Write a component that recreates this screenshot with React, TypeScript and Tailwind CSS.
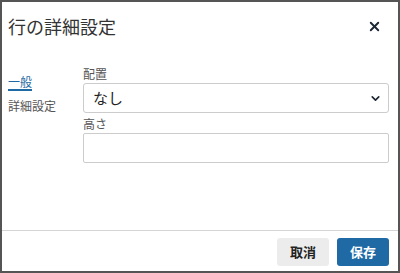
import { X, ChevronDown } from "lucide-react";

const font = { fontFamily: '"Noto Sans CJK JP", "Noto Sans", sans-serif' };

export default function App() {
  return (
    <div
      className="w-[400px] h-[273px] bg-white border-2 border-[#555] flex flex-col text-[#333]"
      style={font}
    >
      {/* Header */}
      <div className="h-[48px] shrink-0 flex items-center justify-between pl-[6px] pr-[16px]">
        <h1 className="text-[18px] leading-[24px] text-[#333]">行の詳細設定</h1>
        <button className="text-[#1c2733]">
          <X size={15} strokeWidth={3} />
        </button>
      </div>

      {/* Body */}
      <div className="flex-1 flex pt-[16px]">
        <nav className="w-[81px] shrink-0 pl-[6px] pt-[2px]">
          <div>
            <span className="inline-block text-[12px] leading-[14px] text-[#1f6aa5] border-b-2 border-[#1f6aa5]">
              一般
            </span>
          </div>
          <p className="mt-[6px] text-[12px] leading-[16px] text-[#555]">詳細設定</p>
        </nav>

        <div className="flex-1 min-w-0 pr-[9px]">
          <label className="block text-[12px] leading-[16px] text-[#555]">配置</label>
          <div className="mt-[1px] h-[30px] border border-[#ccc] rounded-[3px] flex items-center justify-between pl-[9px] pr-[6px]">
            <span className="text-[15px] text-[#222]">なし</span>
            <ChevronDown size={13} strokeWidth={3} className="text-[#1c2733]" />
          </div>
          <label className="block mt-[3px] text-[12px] leading-[16px] text-[#555]">高さ</label>
          <div className="mt-[1px] h-[30px] border border-[#ccc] rounded-[2px]" />
        </div>
      </div>

      {/* Footer */}
      <div className="h-[41px] shrink-0 border-t border-[#d5d5d5] flex items-center justify-end gap-2 pr-[9px] pt-[2px]">
        <button className="w-[52px] h-[28px] rounded-[3px] bg-[#ececec] text-[13px] font-bold text-[#222]">
          取消
        </button>
        <button className="w-[52px] h-[28px] rounded-[3px] bg-[#1f6aa5] text-[13px] font-bold text-white">
          保存
        </button>
      </div>
    </div>
  );
}
